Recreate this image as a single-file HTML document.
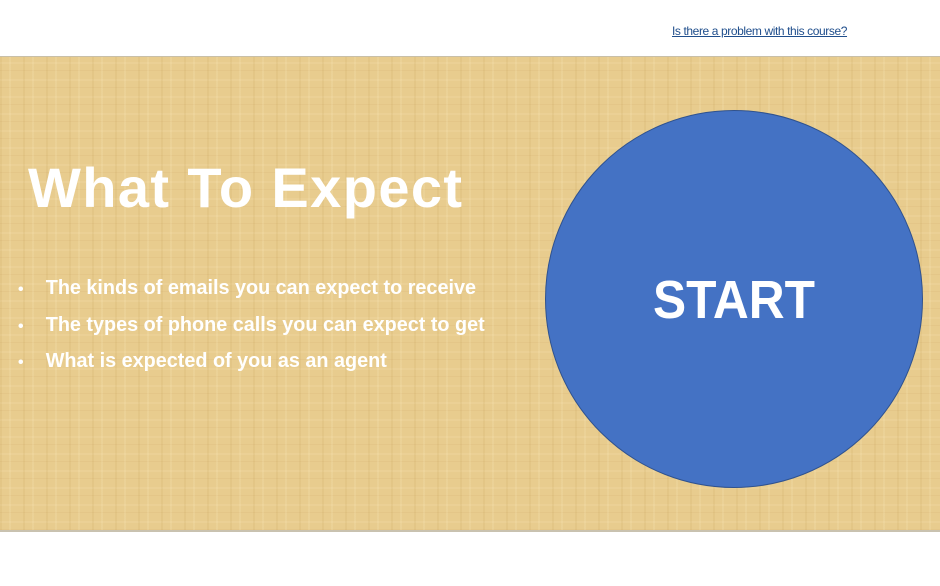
<!DOCTYPE html>
<html><head><meta charset="utf-8"><style>
body{margin:0;width:940px;height:586px;background:#fff;position:relative;overflow:hidden;font-family:"Liberation Sans",sans-serif}
.link{position:absolute;left:672px;top:24px;font-size:12px;color:#1f4e8c;text-decoration:underline;letter-spacing:-0.4px}
.slide{position:absolute;left:0;top:56px;width:940px;height:473px;border-top:1px solid #c8bfa8;border-bottom:2px solid #c9c2b0;
background:
repeating-linear-gradient(90deg,rgba(190,150,80,.12) 0 2px,transparent 2px 9px,rgba(255,240,200,.15) 9px 11px,transparent 11px 23px),
repeating-linear-gradient(0deg,rgba(190,150,80,.10) 0 1px,transparent 1px 7px,rgba(255,240,200,.12) 7px 9px,transparent 9px 17px),
#e8cc8e}
h1{position:absolute;left:28px;top:98px;margin:0;font-size:56px;font-weight:bold;color:#fff;letter-spacing:1.4px}
ul{position:absolute;left:18px;top:220px;margin:0;padding:0;list-style:none;color:#fff;font-weight:bold;font-size:20px}
li{height:36.5px;white-space:nowrap;transform:scaleX(.99);transform-origin:left}
li span{display:inline-block;width:28px;font-size:16px}
.circle{position:absolute;left:545px;top:53px;width:376px;height:376px;border-radius:50%;background:#4472c4;border:1.5px solid #2f528f}
.start{position:absolute;left:0;width:100%;top:158px;text-align:center;color:#fff;font-weight:bold;font-size:54px;transform:scaleX(.92)}
</style></head><body>
<div class="link">Is there a problem with this course?</div>
<div class="slide">
<h1>What To Expect</h1>
<ul>
<li><span>•</span>The kinds of emails you can expect to receive</li>
<li><span>•</span>The types of phone calls you can expect to get</li>
<li><span>•</span>What is expected of you as an agent</li>
</ul>
<div class="circle"><div class="start">START</div></div>
</div>
</body></html>
